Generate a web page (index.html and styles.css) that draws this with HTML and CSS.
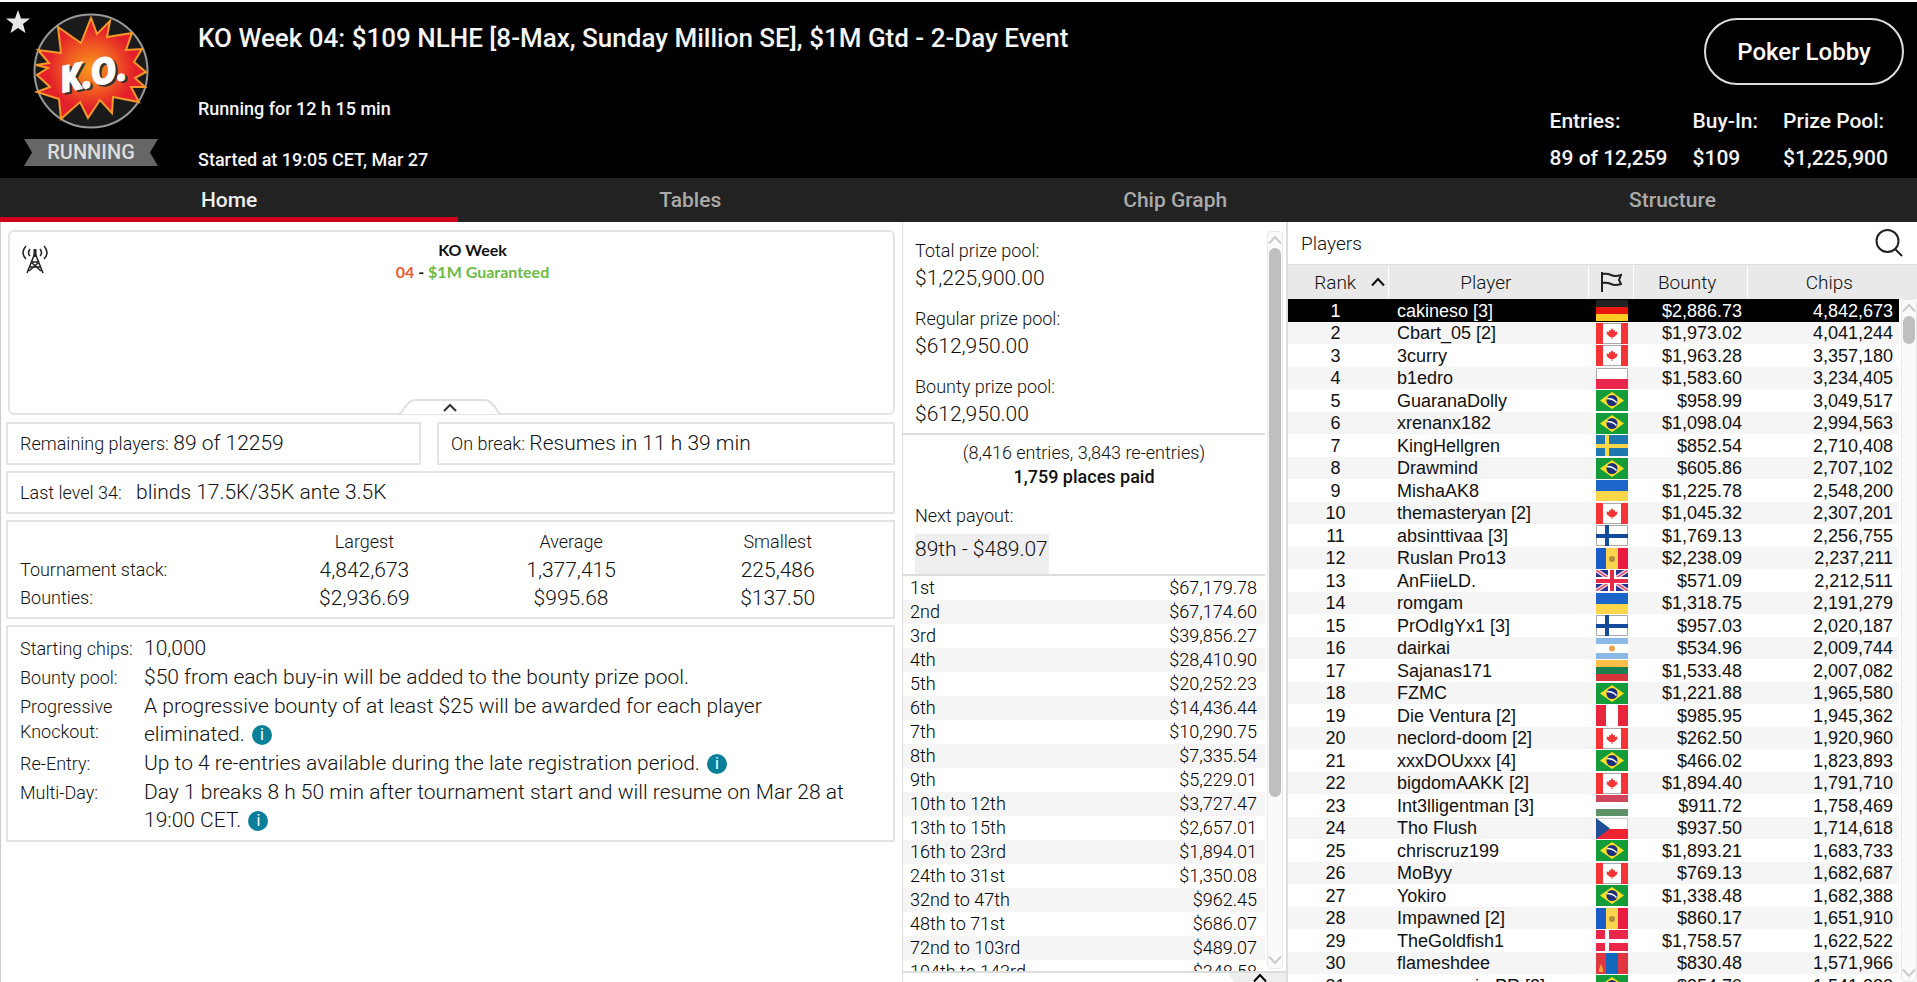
FILE: index.html
```
<!DOCTYPE html>
<html lang="en">
<head>
    <meta charset="UTF-8">
    <meta name="viewport" content="width=device-width, initial-scale=1.0">
    <title>KO Week 04 - Tournament Lobby</title>
    <link rel="stylesheet" href="styles.css">
</head>
<body>

    <!-- icons and flags shared by the page -->
    <svg class="defs" aria-hidden="true">
        <symbol id="up" viewBox="0 0 16 10"><path d="M2 8.500L8 2l6 6.500" fill="none" stroke="currentColor" stroke-width="2"/></symbol>
        <symbol id="down" viewBox="0 0 16 10"><path d="M2 1.500L8 8l6-6.500" fill="none" stroke="currentColor" stroke-width="2"/></symbol>
        <symbol id="de" viewBox="0 0 32 21"><path fill="#222" d="M0 0h32v7H0z"/><path fill="#e8160c" d="M0 7h32v7H0z"/><path fill="#fc2" d="M0 14h32v7H0z"/></symbol>
        <symbol id="ca" viewBox="0 0 32 21"><path fill="#fff" d="M0 0h32v21H0z"/><path fill="#f53535" d="M0 0h7v21H0zM25 0h7v21h-7zM16 5l1.500 2.500 1.500-.5v2l2.500-.5-.5 2 .5.500-3.500 3h-1.500v2h-1v-2H14l-3.500-3 .5-.5-.5-2 2.500.5V7l1.500.500z"/><path fill="none" stroke="#aaa" d="M7 .5h18M7 20.500h18"/></symbol>
        <symbol id="pl" viewBox="0 0 32 21"><path fill="#fff" stroke="#aaa" d="M.5.5h31v11H.5z"/><path fill="#e8274b" d="M0 11h32v10H0z"/></symbol>
        <symbol id="br" viewBox="0 0 32 21"><path fill="#149b3a" d="M0 0h32v21H0z"/><path fill="#fbdf25" d="M16 2l12 8.500L16 19 4 10.500z"/><circle cx="16" cy="10.500" r="5.500" fill="#1c2f7c"/><path d="M11 8.500q6 0 9.500 4" fill="none" stroke="#fff" stroke-width="1.500"/></symbol>
        <symbol id="se" viewBox="0 0 32 21"><path fill="#1f77b0" d="M0 0h32v21H0z"/><path fill="#f9d648" d="M9 0h4v21H9zM0 9h32v4H0z"/></symbol>
        <symbol id="ua" viewBox="0 0 32 21"><path fill="#1c66c9" d="M0 0h32v11H0z"/><path fill="#fdd749" d="M0 11h32v10H0z"/></symbol>
        <symbol id="fi" viewBox="0 0 32 21"><path fill="#fff" stroke="#aaa" d="M.5.5h31v20H.5z"/><path fill="#134a9c" d="M9 0h4v21H9zM0 9h32v4H0z"/></symbol>
        <symbol id="md" viewBox="0 0 32 21"><path fill="#1a5ccc" d="M0 0h10v21H0z"/><path fill="#fbd34e" d="M10 0h12v21H10z"/><path fill="#ec1a42" d="M22 0h10v21H22z"/><circle cx="16" cy="11" r="3" fill="#b58a3c"/></symbol>
        <symbol id="gb" viewBox="0 0 32 21"><path fill="#28348e" d="M0 0h32v21H0z"/><path stroke="#f4dbe6" stroke-width="4" d="M0 0l32 21M32 0L0 21"/><path stroke="#e0526e" stroke-width="1.500" d="M0 0l32 21M32 0L0 21"/><path fill="#fff" d="M12 0h8v21h-8zM0 7h32v7H0z"/><path fill="#e62a48" d="M14 0h4v21h-4zM0 9h32v4H0z"/></symbol>
        <symbol id="ar" viewBox="0 0 32 21"><path fill="#8bb9e6" d="M0 0h32v21H0z"/><path fill="#fff" d="M0 6h32v9H0z"/><circle cx="16" cy="10.500" r="3" fill="#e6a350"/></symbol>
        <symbol id="lt" viewBox="0 0 32 21"><path fill="#fdbf47" d="M0 0h32v7H0z"/><path fill="#1a8050" d="M0 7h32v7H0z"/><path fill="#d8343c" d="M0 14h32v7H0z"/></symbol>
        <symbol id="pe" viewBox="0 0 32 21"><path fill="#fff" d="M0 0h32v21H0z"/><path fill="#e8243c" d="M0 0h10v21H0zM22 0h10v21H22z"/></symbol>
        <symbol id="hu" viewBox="0 0 32 21"><path fill="#d1455c" d="M0 0h32v7H0z"/><path fill="#fff" d="M0 7h32v7H0z"/><path fill="#5f9269" d="M0 14h32v7H0z"/></symbol>
        <symbol id="cz" viewBox="0 0 32 21"><path fill="#fff" stroke="#ccc" d="M.5.5h31v11H.5z"/><path fill="#ee2430" d="M0 11h32v10H0z"/><path fill="#1e4f98" d="M0 0l14 10.500L0 21z"/></symbol>
        <symbol id="dk" viewBox="0 0 32 21"><path fill="#e8274b" d="M0 0h32v21H0z"/><path fill="#fff" d="M9 0h4v21H9zM0 9h32v4H0z"/></symbol>
        <symbol id="mn" viewBox="0 0 32 21"><path fill="#e03840" d="M0 0h32v21H0z"/><path fill="#1268bd" d="M10 0h12v21H10z"/><path fill="#fba13c" d="M5 11l2 5v3H3v-3z"/></symbol>
    </svg>

    <header class="header">
        <div class="badge">
            <button class="favorite" aria-label="Favorite">
                <svg width="26" height="26" viewBox="0 0 26 26"><path fill="#e6e6e6" d="M13 1l3 8.500h9l-7 5.500 2.500 9L13 19l-7.500 5L8 15 1 9.500h9z"/></svg>
            </button>
            <svg class="logo" width="116" height="116" viewBox="0 0 116 116">
                <defs>
                    <radialGradient id="burst"><stop offset="0" stop-color="#fb9a1c"/><stop offset=".45" stop-color="#f05a22"/><stop offset=".8" stop-color="#e4202a"/></radialGradient>
                </defs>
                <circle cx="58" cy="58" r="56.500" fill="#1a1a1a" stroke="#999" stroke-width="2"/>
                <path fill="url(#burst)" stroke="#f39a2b" stroke-width="2" d="M25 14L48 30 58 5l6 16L77 8l-3 16 25-4-6 17 16-1-8 13 12 10-11 6 10 9H98l8 15-26-5-1 16-12-13-12 18-8-16-19 17-2-20-22-7 13-5-13-12 11-7-12-3 13-2L5 37l23 3z"/>
                <g class="ko" transform="rotate(-12 58 60)">
                    <text class="shadow" x="28" y="75">K.O.</text>
                    <text x="26" y="73">K.O.</text>
                </g>
            </svg>
            <span class="status">RUNNING</span>
        </div>
        <div class="heading">
            <h1>KO Week 04: $109 NLHE [8-Max, Sunday Million SE], $1M Gtd - 2-Day Event</h1>
            <p>Running for 12 h 15 min</p>
            <p>Started at 19:05 CET, Mar 27</p>
        </div>
        <div class="summary">
            <button class="lobby">Poker Lobby</button>
            <dl>
                <div><dt>Entries:</dt><dd>89 of 12,259</dd></div>
                <div><dt>Buy-In:</dt><dd>$109</dd></div>
                <div><dt>Prize Pool:</dt><dd>$1,225,900</dd></div>
            </dl>
        </div>
    </header>

    <nav class="tabs">
        <a class="active" href="#home">Home</a>
        <a href="#tables">Tables</a>
        <a href="#chips">Chip Graph</a>
        <a href="#structure">Structure</a>
    </nav>

    <main class="content">
        <section class="info" id="home">
            <div class="message">
                <svg class="antenna" width="28" height="30" viewBox="0 0 28 30" fill="none" stroke="#222" stroke-width="1.500">
                    <path d="M14 8L6 28M14 8l8 20M11 17h6M9 22h10M8 26l9-8M20 26l-9-8"/><path stroke-width="3" d="M14 4v8"/>
                    <path d="M9 4q-3 4 0 7M19 4q3 4 0 7M5 1q-6 6.500 0 13M23 1q6 6.500 0 13"/>
                </svg>
                <p>KO Week<br><span class="red">04</span> - <span class="green">$1M Guaranteed</span></p>
                <button class="collapse" aria-label="Collapse">
                    <svg width="104" height="16" viewBox="0 0 104 16"><path d="M0 15q3 0 5-4Q11 1 17 1h70q6 0 12 10 2 4 5 4" fill="#fff" stroke="#e0e0e0" stroke-width="2"/><path d="M46 12l6-6 6 6" fill="none" stroke="#333" stroke-width="2"/></svg>
                </button>
            </div>

            <div class="pair">
                <p class="box">Remaining players: <b>89 of 12259</b></p>
                <p class="box">On break: <b>Resumes in 11 h 39 min</b></p>
            </div>
            <p class="box">Last level 34: <b class="level">blinds 17.5K/35K ante 3.5K</b></p>

            <div class="box stats">
                <table>
                    <tr><td></td><th>Largest</th><th>Average</th><th>Smallest</th></tr>
                    <tr><th>Tournament stack:</th><td>4,842,673</td><td>1,377,415</td><td>225,486</td></tr>
                    <tr><th>Bounties:</th><td>$2,936.69</td><td>$995.68</td><td>$137.50</td></tr>
                </table>
            </div>

            <dl class="box rules">
                <dt>Starting chips:</dt><dd>10,000</dd>
                <dt>Bounty pool:</dt><dd>$50 from each buy-in will be added to the bounty prize pool.</dd>
                <dt>Progressive Knockout:</dt><dd>A progressive bounty of at least $25 will be awarded for each player eliminated. <button class="tip">i</button></dd>
                <dt>Re-Entry:</dt><dd>Up to 4 re-entries available during the late registration period. <button class="tip">i</button></dd>
                <dt>Multi-Day:</dt><dd>Day 1 breaks 8 h 50 min after tournament start and will resume on Mar 28 at 19:00 CET. <button class="tip">i</button></dd>
            </dl>
        </section>

        <section class="prizes">
            <div class="prizes-view">
                <div class="prizes-list">
                    <dl class="pools">
                        <dt>Total prize pool:</dt><dd>$1,225,900.00</dd>
                        <dt>Regular prize pool:</dt><dd>$612,950.00</dd>
                        <dt>Bounty prize pool:</dt><dd>$612,950.00</dd>
                    </dl>
                    <div class="next">
                        <p class="entries">(8,416 entries, 3,843 re-entries)<br><strong>1,759 places paid</strong></p>
                        <p>Next payout:</p>
                        <span class="payout">89th - $489.07</span>
                    </div>
                    <table class="payouts">
                        <tr><td>1st</td><td>$67,179.78</td></tr>
                        <tr><td>2nd</td><td>$67,174.60</td></tr>
                        <tr><td>3rd</td><td>$39,856.27</td></tr>
                        <tr><td>4th</td><td>$28,410.90</td></tr>
                        <tr><td>5th</td><td>$20,252.23</td></tr>
                        <tr><td>6th</td><td>$14,436.44</td></tr>
                        <tr><td>7th</td><td>$10,290.75</td></tr>
                        <tr><td>8th</td><td>$7,335.54</td></tr>
                        <tr><td>9th</td><td>$5,229.01</td></tr>
                        <tr><td>10th to 12th</td><td>$3,727.47</td></tr>
                        <tr><td>13th to 15th</td><td>$2,657.01</td></tr>
                        <tr><td>16th to 23rd</td><td>$1,894.01</td></tr>
                        <tr><td>24th to 31st</td><td>$1,350.08</td></tr>
                        <tr><td>32nd to 47th</td><td>$962.45</td></tr>
                        <tr><td>48th to 71st</td><td>$686.07</td></tr>
                        <tr><td>72nd to 103rd</td><td>$489.07</td></tr>
                        <tr><td>104th to 143rd</td><td>$348.58</td></tr>
                    </table>
                </div>
                <div class="scrollbar" aria-hidden="true">
                    <svg width="16" height="10"><use href="#up"/></svg>
                    <div class="track"><div class="thumb"></div></div>
                    <svg width="16" height="10"><use href="#down"/></svg>
                </div>
            </div>
            <button class="expand" aria-label="Expand"><svg width="16" height="10"><use href="#up"/></svg></button>
        </section>

        <section class="players">
            <div class="players-title">
                <h2>Players</h2>
                <button class="search" aria-label="Search"><svg width="28" height="28" viewBox="0 0 28 28" fill="none" stroke="#222" stroke-width="2"><circle cx="12.500" cy="12" r="11"/><path d="M20 20l7 7"/></svg></button>
            </div>
            <div class="players-head">
                <span class="sorted">Rank <svg width="16" height="10"><use href="#up"/></svg></span>
                <span>Player</span>
                <span class="country"><svg width="22" height="20" viewBox="0 0 22 20" fill="none" stroke="#222" stroke-width="2"><path d="M2 0v20M2 2q5-1 9 1t10 0l-2 5 2 4q-6 2-10 0t-9-1"/></svg></span>
                <span>Bounty</span>
                <span class="last">Chips</span>
            </div>
            <div class="players-view">
                <div class="players-list">
                    <table>
                        <colgroup><col class="rank"><col class="name"><col class="flag"><col class="bounty"><col class="chips"></colgroup>
                        <tr class="selected"><td>1</td><td>cakineso [3]</td><td><svg><use href="#de"/></svg></td><td>$2,886.73</td><td>4,842,673</td></tr>
                        <tr><td>2</td><td>Cbart_05 [2]</td><td><svg><use href="#ca"/></svg></td><td>$1,973.02</td><td>4,041,244</td></tr>
                        <tr><td>3</td><td>3curry</td><td><svg><use href="#ca"/></svg></td><td>$1,963.28</td><td>3,357,180</td></tr>
                        <tr><td>4</td><td>b1edro</td><td><svg><use href="#pl"/></svg></td><td>$1,583.60</td><td>3,234,405</td></tr>
                        <tr><td>5</td><td>GuaranaDolly</td><td><svg><use href="#br"/></svg></td><td>$958.99</td><td>3,049,517</td></tr>
                        <tr><td>6</td><td>xrenanx182</td><td><svg><use href="#br"/></svg></td><td>$1,098.04</td><td>2,994,563</td></tr>
                        <tr><td>7</td><td>KingHellgren</td><td><svg><use href="#se"/></svg></td><td>$852.54</td><td>2,710,408</td></tr>
                        <tr><td>8</td><td>Drawmind</td><td><svg><use href="#br"/></svg></td><td>$605.86</td><td>2,707,102</td></tr>
                        <tr><td>9</td><td>MishaAK8</td><td><svg><use href="#ua"/></svg></td><td>$1,225.78</td><td>2,548,200</td></tr>
                        <tr><td>10</td><td>themasteryan [2]</td><td><svg><use href="#ca"/></svg></td><td>$1,045.32</td><td>2,307,201</td></tr>
                        <tr><td>11</td><td>absinttivaa [3]</td><td><svg><use href="#fi"/></svg></td><td>$1,769.13</td><td>2,256,755</td></tr>
                        <tr><td>12</td><td>Ruslan Pro13</td><td><svg><use href="#md"/></svg></td><td>$2,238.09</td><td>2,237,211</td></tr>
                        <tr><td>13</td><td>AnFiieLD.</td><td><svg><use href="#gb"/></svg></td><td>$571.09</td><td>2,212,511</td></tr>
                        <tr><td>14</td><td>romgam</td><td><svg><use href="#ua"/></svg></td><td>$1,318.75</td><td>2,191,279</td></tr>
                        <tr><td>15</td><td>PrOdIgYx1 [3]</td><td><svg><use href="#fi"/></svg></td><td>$957.03</td><td>2,020,187</td></tr>
                        <tr><td>16</td><td>dairkai</td><td><svg><use href="#ar"/></svg></td><td>$534.96</td><td>2,009,744</td></tr>
                        <tr><td>17</td><td>Sajanas171</td><td><svg><use href="#lt"/></svg></td><td>$1,533.48</td><td>2,007,082</td></tr>
                        <tr><td>18</td><td>FZMC</td><td><svg><use href="#br"/></svg></td><td>$1,221.88</td><td>1,965,580</td></tr>
                        <tr><td>19</td><td>Die Ventura [2]</td><td><svg><use href="#pe"/></svg></td><td>$985.95</td><td>1,945,362</td></tr>
                        <tr><td>20</td><td>neclord-doom [2]</td><td><svg><use href="#ca"/></svg></td><td>$262.50</td><td>1,920,960</td></tr>
                        <tr><td>21</td><td>xxxDOUxxx [4]</td><td><svg><use href="#br"/></svg></td><td>$466.02</td><td>1,823,893</td></tr>
                        <tr><td>22</td><td>bigdomAAKK [2]</td><td><svg><use href="#ca"/></svg></td><td>$1,894.40</td><td>1,791,710</td></tr>
                        <tr><td>23</td><td>Int3lligentman [3]</td><td><svg><use href="#hu"/></svg></td><td>$911.72</td><td>1,758,469</td></tr>
                        <tr><td>24</td><td>Tho Flush</td><td><svg><use href="#cz"/></svg></td><td>$937.50</td><td>1,714,618</td></tr>
                        <tr><td>25</td><td>chriscruz199</td><td><svg><use href="#br"/></svg></td><td>$1,893.21</td><td>1,683,733</td></tr>
                        <tr><td>26</td><td>MoByy</td><td><svg><use href="#ca"/></svg></td><td>$769.13</td><td>1,682,687</td></tr>
                        <tr><td>27</td><td>Yokiro</td><td><svg><use href="#br"/></svg></td><td>$1,338.48</td><td>1,682,388</td></tr>
                        <tr><td>28</td><td>Impawned [2]</td><td><svg><use href="#md"/></svg></td><td>$860.17</td><td>1,651,910</td></tr>
                        <tr><td>29</td><td>TheGoldfish1</td><td><svg><use href="#dk"/></svg></td><td>$1,758.57</td><td>1,622,522</td></tr>
                        <tr><td>30</td><td>flameshdee</td><td><svg><use href="#mn"/></svg></td><td>$830.48</td><td>1,571,966</td></tr>
                        <tr><td>31</td><td>marcusavierPR [2]</td><td><svg><use href="#br"/></svg></td><td>$354.70</td><td>1,541,332</td></tr>
                    </table>
                </div>
                <div class="scrollbar" aria-hidden="true">
                    <svg width="16" height="10"><use href="#up"/></svg>
                    <div class="track"><div class="thumb"></div></div>
                    <svg width="16" height="10"><use href="#down"/></svg>
                </div>
            </div>
        </section>
    </main>

</body>
</html>
```
FILE: styles.css
```
* {
    box-sizing: border-box;
}
body {
    margin: 0;
    height: 100vh;
    display: flex;
    flex-direction: column;
    overflow: hidden;
    border-top: 2px solid #fff;
    font-family: Roboto, Arial, sans-serif;
    font-size: 18px;
    font-weight: 300;
    color: #111;
    background: #fff;
}
h1, h2, p, dl, dd {
    margin: 0;
}
button {
    padding: 0;
    border: none;
    background: none;
    font-family: inherit;
    cursor: pointer;
}
svg {
    display: block;
}
table {
    width: 100%;
    border-collapse: collapse;
}
td, th {
    padding: 0;
    font-weight: inherit;
}
.defs {
    position: absolute;
    width: 0;
    height: 0;
}

/* Header */
.header {
    display: flex;
    height: 176px;
    flex-shrink: 0;
    background: #000;
    color: #f4f4f4;
    font-weight: 500;
}
.badge {
    position: relative;
    width: 182px;
    padding-top: 11px;
    display: flex;
    flex-direction: column;
    align-items: center;
    gap: 10px;
    flex-shrink: 0;
}
.favorite {
    position: absolute;
    left: 5px;
    top: 7px;
}
.ko text {
    font: italic bold 35px "Open Sans", sans-serif;
    fill: #fff;
    stroke: #fff;
    stroke-width: 2px;
}
.ko .shadow {
    fill: #333;
    stroke: #333;
}
.status {
    width: 134px;
    line-height: 27px;
    text-align: center;
    font-size: 20px;
    color: #ddd;
    background: #666;
    clip-path: polygon(0 0, 100% 0, 94% 50%, 100% 100%, 0 100%, 6% 50%);
}
.heading {
    flex: 1;
    padding: 20px 0 0 16px;
}
.heading h1 {
    font-size: 26px;
    line-height: 32px;
    font-weight: 500;
    margin-bottom: 40px;
}
.heading p {
    line-height: 30px;
    margin-bottom: 21px;
}
.summary {
    display: flex;
    flex-direction: column;
    align-items: flex-end;
    justify-content: space-between;
    padding: 16px 13px 1px 0;
}
.lobby {
    width: 200px;
    height: 67px;
    border: 2px solid #ddd;
    border-radius: 34px;
    color: #fff;
    font-size: 24px;
    font-weight: 500;
}
.summary dl {
    display: flex;
    gap: 25px;
    padding-right: 16px;
    font-size: 21px;
    line-height: 37px;
}

/* Tabs */
.tabs {
    display: flex;
    height: 44px;
    flex-shrink: 0;
    background: #222;
}
.tabs a {
    flex: 1 1 auto;
    text-align: center;
    line-height: 44px;
    font-size: 21px;
    font-weight: 500;
    color: #aaa;
    text-decoration: none;
}
.tabs .active {
    color: #eee;
    border-bottom: 5px solid #d0021b;
}

.content {
    flex: 1;
    min-height: 0;
    display: grid;
    grid-template-columns: 902fr 386fr 629fr;
}

/* Tournament info */
.info {
    display: flex;
    flex-direction: column;
    gap: 6px;
    padding: 8px 7px 0 5px;
    border-left: 1px solid #ccc;
}
.message {
    position: relative;
    height: 185px;
    margin: 0 0 1px 2px;
    padding: 7px 0 0 42px;
    border: 2px solid #e4e4e4;
    border-radius: 6px;
    text-align: center;
    font: bold 16px/22px Lato, sans-serif;
}
.message .red {
    color: #ee5a36;
}
.message .green {
    color: #6bbb45;
}
.antenna {
    position: absolute;
    left: 11px;
    top: 13px;
}
.collapse {
    position: absolute;
    left: calc(50% - 54px);
    bottom: -2px;
}
.pair {
    display: grid;
    grid-template-columns: 415fr 458fr;
    gap: 16px;
}
.box {
    padding: 0 12px;
    border: 2px solid #e4e4e4;
    line-height: 39px;
}
.box b, .box td, .rules dd {
    font-size: 21px;
    font-weight: 300;
}
.box b {
    line-height: 24px;
}
.level {
    margin-left: 10px;
}
.stats {
    padding: 6px 12px 5px;
}
.stats table {
    table-layout: fixed;
    text-align: center;
    line-height: 28px;
}
.stats tr > :first-child {
    width: 28%;
    text-align: left;
}
.rules {
    display: grid;
    grid-template-columns: 124px 1fr;
    padding: 7px 12px 5px;
    line-height: 25px;
}
.rules dt {
    padding-top: 2px;
}
.rules dd {
    line-height: 28px;
    padding: 0 30px 1px 0;
}
.tip {
    width: 20px;
    height: 20px;
    margin-left: 2px;
    border-radius: 50%;
    background: #0a7f99;
    color: #fff;
    font-size: 16px;
    line-height: 20px;
    vertical-align: middle;
}

/* Prize pool */
.prizes {
    display: flex;
    flex-direction: column;
    min-height: 0;
    border: 1px solid #ddd;
    border-width: 0 2px 0 1px;
}
.prizes-view {
    display: flex;
    flex: 1;
    min-height: 0;
    border-bottom: 2px solid #ddd;
}
.prizes-list {
    flex: 1;
    overflow: hidden;
}
.pools {
    padding: 16px 12px 5px;
    border-bottom: 2px solid #ddd;
}
.pools dt {
    line-height: 26px;
}
.pools dd {
    font-size: 21px;
    line-height: 28px;
    margin-bottom: 14px;
}
.pools dd:last-child {
    margin-bottom: 0;
}
.next {
    padding: 6px 12px 0;
    border-bottom: 2px solid #ddd;
    line-height: 24px;
}
.entries {
    text-align: center;
    margin-bottom: 15px;
}
.entries strong {
    font-weight: 500;
}
.payout {
    display: inline-block;
    margin-top: 6px;
    padding: 0 1px 10px 0;
    font-size: 21px;
    line-height: 30px;
    vertical-align: top;
    background: #eee;
}
.payouts {
    line-height: 24px;
    color: #000;
}
.payouts td {
    padding: 0 8px 0 7px;
}
.payouts td:last-child {
    text-align: right;
}
.payouts tr:nth-child(even), .players tr:nth-child(even) {
    background: #f5f5f5;
}
.expand {
    align-self: flex-end;
    width: 58px;
    height: 9px;
    padding: 0 18px 0 24px;
    overflow: hidden;
    background: #eee;
    clip-path: polygon(0 0, 100% 0, 100% 100%, 10% 100%);
}

/* Scrollbars */
.scrollbar {
    display: flex;
    flex-direction: column;
    align-items: center;
    width: 16px;
    margin: 9px 3px 2px 2px;
    padding: 3px 0;
    gap: 3px;
    border: 1px solid #e8e8e8;
    border-radius: 4px;
    background: #fafafa;
    color: #ccc;
}
.track {
    flex: 1;
}
.thumb {
    width: 12px;
    height: 78%;
    border-radius: 6px;
    background: #bfbfbf;
}

/* Players */
.players {
    display: flex;
    flex-direction: column;
    min-height: 0;
    font-weight: 400;
}
.players-title {
    display: flex;
    justify-content: space-between;
    align-items: center;
    height: 43px;
    padding: 0 14px 0 13px;
    border-bottom: 1px solid #ddd;
}
.players-title h2 {
    font-size: 19px;
    font-weight: 300;
}
.players-head {
    display: grid;
    grid-template-columns: 101fr 200fr 44fr 114fr 169fr;
    height: 34px;
    background: #e9e9e9;
    font-size: 19px;
    font-weight: 300;
}
.players-head span {
    display: flex;
    align-items: center;
    justify-content: center;
    padding-right: 6px;
    border-right: 1px solid #fff;
}
.players-head .sorted {
    gap: 14px;
    justify-content: flex-end;
    padding-right: 2px;
}
.players-head .country {
    padding: 0;
}
.players-head .last {
    border: none;
}
.players-view {
    display: flex;
    flex: 1;
    min-height: 0;
}
.players-list {
    flex: 1;
    overflow: hidden;
}
.players table {
    table-layout: fixed;
    font-family: "Liberation Sans", Arial, sans-serif;
    line-height: 22px;
}
.players tr {
    height: 22px;
}
.players tr:nth-child(odd) {
    height: 23px;
}
.players tr.selected {
    background: #000;
    color: #fff;
}
.players td svg {
    width: 32px;
    height: 21px;
    margin: auto;
}
.players td:first-child {
    text-align: center;
    padding-right: 6px;
}
.players td:nth-child(2) {
    padding-left: 8px;
}
.players td:nth-child(4), .players td:nth-child(5) {
    text-align: right;
    padding-right: 6px;
}
.rank {
    width: 101px;
}
.flag {
    width: 44px;
}
.bounty {
    width: 114px;
}
.chips {
    width: 151px;
}
.players .scrollbar {
    margin: 0 0 0 2px;
}
.players .thumb {
    height: 28px;
}
```
